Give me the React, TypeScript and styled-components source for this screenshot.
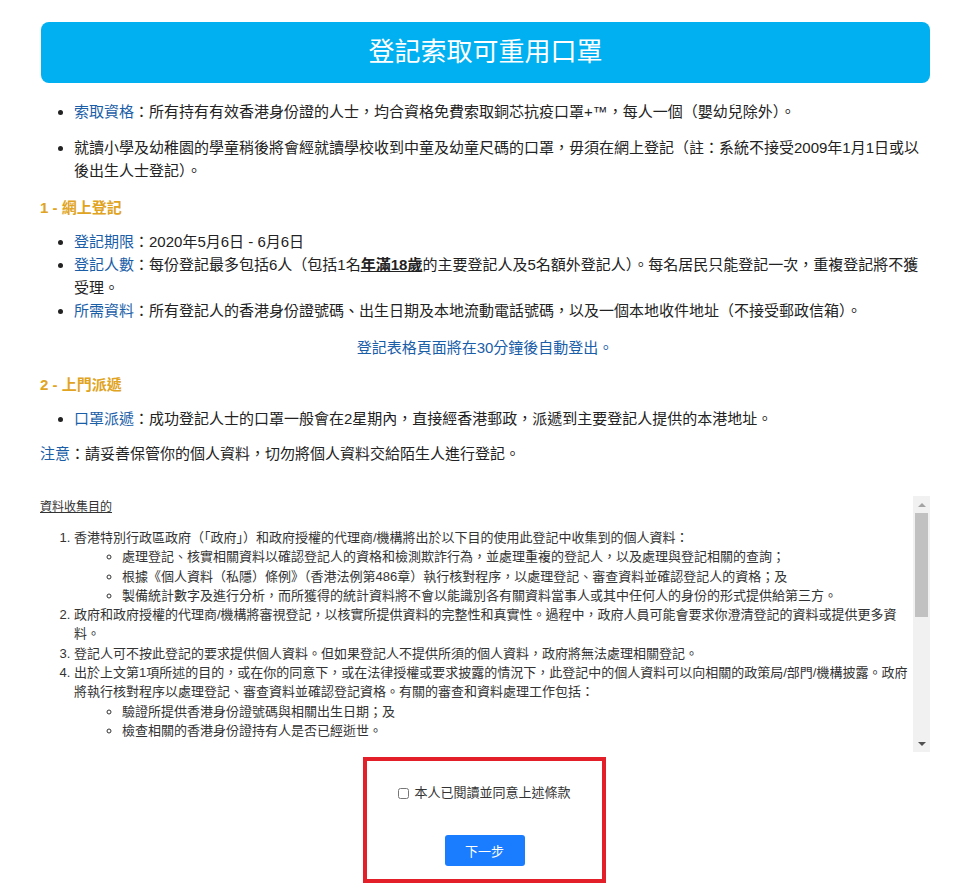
import React from 'react';
import styled, { createGlobalStyle } from 'styled-components';

const GlobalStyle = createGlobalStyle`
  body {
    margin: 0;
    background: #fff;
    font-family: "Liberation Sans", "Noto Sans CJK TC", sans-serif;
    color: #222;
  }
`;

function App() {
  return (
    <>
      <GlobalStyle />
      <Page>
        <Banner>登記索取可重用口罩</Banner>

        <IntroList>
          <IntroItem>
            <Key>索取資格</Key>：所有持有有效香港身份證的人士，均合資格免費索取銅芯抗疫口罩+™，每人一個（嬰幼兒除外）。
          </IntroItem>
          <IntroItem>
            就讀小學及幼稚園的學童稍後將會經就讀學校收到中童及幼童尺碼的口罩，毋須在網上登記（註：系統不接受2009年1月1日或以後出生人士登記）。
          </IntroItem>
        </IntroList>

        <SectionTitle>1 - 網上登記</SectionTitle>
        <InfoList>
          <li>
            <Key>登記期限</Key>：2020年5月6日 - 6月6日
          </li>
          <li>
            <Key>登記人數</Key>：每份登記最多包括6人（包括1名<Strong>年滿18歲</Strong>的主要登記人及5名額外登記人）。每名居民只能登記一次，重複登記將不獲受理。
          </li>
          <li>
            <Key>所需資料</Key>：所有登記人的香港身份證號碼、出生日期及本地流動電話號碼，以及一個本地收件地址（不接受郵政信箱）。
          </li>
        </InfoList>
        <Notice>登記表格頁面將在30分鐘後自動登出。</Notice>

        <SectionTitle>2 - 上門派遞</SectionTitle>
        <InfoList>
          <li>
            <Key>口罩派遞</Key>：成功登記人士的口罩一般會在2星期內，直接經香港郵政，派遞到主要登記人提供的本港地址。
          </li>
        </InfoList>
        <Remark>
          <Key>注意</Key>：請妥善保管你的個人資料，切勿將個人資料交給陌生人進行登記。
        </Remark>

        <TermsBox>
          <TermsScroll>
            <TermsTitle>資料收集目的</TermsTitle>
            <TermsList>
              <li>
                香港特別行政區政府（「政府」）和政府授權的代理商/機構將出於以下目的使用此登記中收集到的個人資料：
                <SubList>
                  <li>處理登記、核實相關資料以確認登記人的資格和檢測欺詐行為，並處理重複的登記人，以及處理與登記相關的查詢；</li>
                  <li>根據《個人資料（私隱）條例》（香港法例第486章）執行核對程序，以處理登記、審查資料並確認登記人的資格；及</li>
                  <li>製備統計數字及進行分析，而所獲得的統計資料將不會以能識別各有關資料當事人或其中任何人的身份的形式提供給第三方。</li>
                </SubList>
              </li>
              <li>政府和政府授權的代理商/機構將審視登記，以核實所提供資料的完整性和真實性。過程中，政府人員可能會要求你澄清登記的資料或提供更多資料。</li>
              <li>登記人可不按此登記的要求提供個人資料。但如果登記人不提供所須的個人資料，政府將無法處理相關登記。</li>
              <li>
                出於上文第1項所述的目的，或在你的同意下，或在法律授權或要求披露的情況下，此登記中的個人資料可以向相關的政策局/部門/機構披露。政府將執行核對程序以處理登記、審查資料並確認登記資格。有關的審查和資料處理工作包括：
                <SubList>
                  <li>驗證所提供香港身份證號碼與相關出生日期；及</li>
                  <li>檢查相關的香港身份證持有人是否已經逝世。</li>
                </SubList>
              </li>
            </TermsList>
            <TermsTitle>保留及查閱個人資料</TermsTitle>
            <TermsList start={5}>
              <li>在本登記中收集到的個人資料會保留至完成上述目的所需的時間，其後將會被銷毀。</li>
              <li>除上文第4項所述的情況外，你的個人資料不會向任何其他人士披露。</li>
              <li>根據《個人資料（私隱）條例》第18及22條和附表1第6原則，你有權要求查閱及改正你的個人資料。</li>
              <li>有關查閱及改正個人資料的要求，請以書面向政府授權的代理商/機構提出。</li>
              <li>如對本登記的個人資料收集有任何查詢，請致電查詢熱線。</li>
            </TermsList>
          </TermsScroll>
          <ScrollRail aria-hidden="true">
            <RailArrow>
              <svg width="8" height="4" viewBox="0 0 8 4">
                <path d="M0 4 L4 0 L8 4 Z" fill="#a3a3a3" />
              </svg>
            </RailArrow>
            <RailTrack>
              <RailThumb />
            </RailTrack>
            <RailArrow>
              <svg width="8" height="4" viewBox="0 0 8 4">
                <path d="M0 0 L8 0 L4 4 Z" fill="#505050" />
              </svg>
            </RailArrow>
          </ScrollRail>
        </TermsBox>

        <ConfirmArea>
          <AgreeLabel>
            <CheckBox type="checkbox" />
            本人已閱讀並同意上述條款
          </AgreeLabel>
          <NextButton type="button">下一步</NextButton>
        </ConfirmArea>
      </Page>
    </>
  );
}

const Page = styled.div`
  padding: 22px 48px 0 40px;
  font-size: 15px;
  line-height: 23px;
`;

const Banner = styled.h1`
  margin: 0 0 0 1px;
  height: 61px;
  display: flex;
  align-items: center;
  justify-content: center;
  background-color: #00b0f0;
  border-radius: 8px;
  color: #fff;
  font-size: 26px;
  font-weight: normal;
`;

const IntroList = styled.ul`
  margin: 17px 0 0;
  padding-left: 34px;
`;

const IntroItem = styled.li`
  & + & {
    margin-top: 13px;
  }
`;

const Key = styled.span`
  color: #1a5ea8;
`;

const Strong = styled.strong`
  text-decoration: underline;
`;

const SectionTitle = styled.h3`
  margin: 14px 0 0;
  font-size: 15px;
  line-height: 23px;
  font-weight: bold;
  color: #e0a422;
`;

const InfoList = styled.ul`
  margin: 11px 0 0;
  padding-left: 34px;
`;

const Notice = styled.p`
  margin: 14px 0 0;
  text-align: center;
  color: #1a5ea8;
`;

const Remark = styled.p`
  margin: 12px 0 0;
`;

const TermsBox = styled.div`
  margin-top: 31px;
  height: 256px;
  display: flex;
  font-size: 13px;
  line-height: 19.3px;
  color: #333;
`;

const TermsScroll = styled.div`
  flex: 1;
  min-width: 0;
  overflow: hidden;
  padding-top: 2px;
`;

const ScrollRail = styled.div`
  width: 17px;
  flex: none;
  display: flex;
  flex-direction: column;
  background-color: #f1f1f1;
`;

const RailArrow = styled.div`
  height: 17px;
  flex: none;
  display: flex;
  align-items: center;
  justify-content: center;
`;

const RailTrack = styled.div`
  flex: 1;
  padding: 0 2px;
`;

const RailThumb = styled.div`
  height: 104px;
  background-color: #c1c1c1;
`;

const TermsTitle = styled.div`
  font-size: 12px;
  line-height: 19px;
  text-decoration: underline;
  & ~ & {
    margin-top: 24px;
  }
`;

const TermsList = styled.ol`
  margin: 11px 0 0;
  padding: 0 0 0 34px;
`;

const SubList = styled.ul`
  margin: 0;
  padding-left: 48px;
  list-style-type: circle;
`;

const ConfirmArea = styled.div`
  width: 243px;
  box-sizing: border-box;
  margin: 5px 0 0 323px;
  border: 4px solid #e3202a;
  padding: 22px 0 13px;
  display: flex;
  flex-direction: column;
  align-items: center;
  gap: 32px;
`;

const AgreeLabel = styled.label`
  display: flex;
  align-items: center;
  gap: 3px;
  font-size: 13px;
  line-height: 20px;
  color: #333;
`;

const CheckBox = styled.input`
  width: 11px;
  height: 11px;
  margin: 0 2px 0 0;
`;

const NextButton = styled.button`
  width: 80px;
  height: 31px;
  border: none;
  border-radius: 3px;
  background-color: #1a7dff;
  color: #fff;
  font-family: "Liberation Sans", "Noto Sans CJK TC", sans-serif;
  font-size: 13px;
`;

export default App;
